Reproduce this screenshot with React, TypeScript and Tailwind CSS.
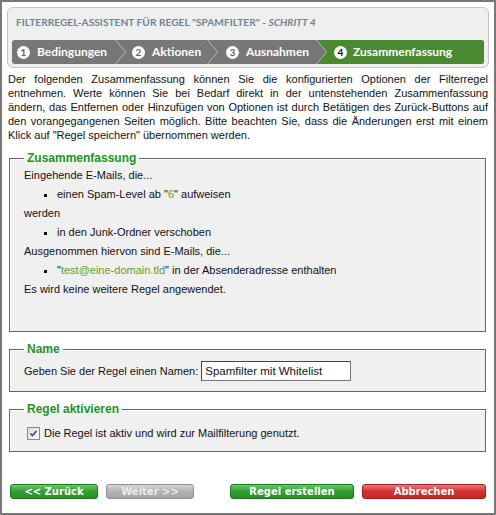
import React from "react";

type Step = { n: number; label: string; w: string; pl: string };

const steps: Step[] = [
  { n: 1, label: "Bedingungen", w: "w-[103px]", pl: "pl-[5px]" },
  { n: 2, label: "Aktionen", w: "w-[80px]", pl: "pl-[5px]" },
  { n: 3, label: "Ausnahmen", w: "w-[97px]", pl: "pl-[7px]" },
];

function Chevron({ from, to }: { from: string; to: string }) {
  return (
    <svg width="12" height="24" viewBox="0 0 12 24" className="shrink-0 block">
      <rect x="0" y="0" width="12" height="24" fill={to} />
      <polygon points="0,0 10,12 0,24" fill={from} />
      <polyline points="0.5,0 10.5,12 0.5,24" fill="none" stroke="#b8b8b8" strokeWidth="1" />
    </svg>
  );
}

function Circle({ n, dark }: { n: number; dark?: boolean }) {
  return (
    <span
      className={`flex h-[13px] w-[13px] shrink-0 items-center justify-center rounded-full bg-white text-[10px] font-bold leading-none ${
        dark ? "text-[#111]" : "text-[#666]"
      }`}
    >
      {n}
    </span>
  );
}

function StepBar() {
  return (
    <div className="flex h-[24px] overflow-hidden rounded-[3px] bg-[#777] font-['Lato',sans-serif] text-[12px] font-bold text-white">
      {steps.map((s, i) => (
        <React.Fragment key={s.n}>
          <div className={`flex items-center gap-[7px] ${s.w} ${s.pl}`}>
            <Circle n={s.n} />
            <span>{s.label}</span>
          </div>
          <Chevron from="#777777" to={i === 2 ? "#4b8a31" : "#777777"} />
        </React.Fragment>
      ))}
      <div className="flex flex-1 items-center gap-[6px] bg-[#4b8a31] pl-[6px]">
        <Circle n={4} dark />
        <span>Zusammenfassung</span>
      </div>
    </div>
  );
}

function Box({ title, children }: { title: string; children: React.ReactNode }) {
  return (
    <fieldset className="border border-[#666] bg-[#f0f0f0] pl-[14px] shadow-[inset_1px_1px_0_#fff]">
      <legend className="px-[3px] text-[12px] leading-[14px] font-bold text-[#1f931f]">{title}</legend>
      {children}
    </fieldset>
  );
}

function Btn({ label, tone, w }: { label: string; tone: "green" | "gray" | "red"; w: string }) {
  const look = {
    green:
      "border-[#1c7a1c] bg-[linear-gradient(to_bottom,#6cc66c,#34a234_45%,#239023)] text-white",
    gray: "border-[#8f8f8f] bg-[linear-gradient(to_bottom,#d6d6d6,#b4b4b4_45%,#a6a6a6)] text-[#ececec]",
    red: "border-[#a81c1c] bg-[linear-gradient(to_bottom,#ec7b7b,#d33333_45%,#c42626)] text-white",
  }[tone];
  return (
    <button
      className={`flex h-[15px] items-center justify-center rounded-[3px] border font-['DejaVu_Sans',sans-serif] text-[10px] leading-none font-bold ${w} ${look}`}
    >
      {label}
    </button>
  );
}

export default function App() {
  return (
    <div className="flex h-[515px] w-[496px] flex-col border-2 border-[#777] bg-white font-['Liberation_Sans',Arial,sans-serif] text-[#111]">
      {/* header with steps */}
      <div className="mx-[5px] mt-[5px] flex h-[61px] flex-col rounded-[6px] border border-[#c4c4c4] bg-[#efefef] px-[4px] pt-[7px]">
        <div className="h-[14px] pl-[4px] font-['Lato',sans-serif] text-[10.2px] leading-[14px] font-bold text-[#74838f]">
          FILTERREGEL-ASSISTENT FÜR REGEL "SPAMFILTER" - <i>SCHRITT 4</i>
        </div>
        <div className="mt-[11px]">
          <StepBar />
        </div>
      </div>

      <p className="mx-[6px] mt-[4px] text-justify text-[11px] leading-[14px]">
        Der folgenden Zusammenfassung können Sie die konfigurierten Optionen der Filterregel entnehmen. Werte
        können Sie bei Bedarf direkt in der untenstehenden Zusammenfassung ändern, das Entfernen oder Hinzufügen
        von Optionen ist durch Betätigen des Zurück-Buttons auf den vorangegangenen Seiten möglich. Bitte beachten
        Sie, dass die Änderungen erst mit einem Klick auf "Regel speichern" übernommen werden.
      </p>

      <div className="mt-[9px] ml-[7px] mr-[8px] flex flex-col gap-[10px]">
        <Box title="Zusammenfassung">
          <div className="h-[166px] pt-[1px] text-[11px] leading-[19px]">
            <div>Eingehende E-Mails, die...</div>
            <ul className="list-[square] pl-[33px]">
              <li>
                einen Spam-Level ab "<span className="text-[#5e9e38]">6</span>" aufweisen
              </li>
            </ul>
            <div>werden</div>
            <ul className="list-[square] pl-[33px]">
              <li>in den Junk-Ordner verschoben</li>
            </ul>
            <div>Ausgenommen hiervon sind E-Mails, die...</div>
            <ul className="list-[square] pl-[33px]">
              <li>
                "<span className="text-[#5e9e38]">test@eine-domain.tld</span>" in der Absenderadresse enthalten
              </li>
            </ul>
            <div>Es wird keine weitere Regel angewendet.</div>
          </div>
        </Box>

        <Box title="Name">
          <div className="flex items-center gap-[3px] pt-[5px] pb-[10px] text-[11px]">
            <span>Geben Sie der Regel einen Namen:</span>
            <input
              readOnly
              value="Spamfilter mit Whitelist"
              className="h-[20px] w-[150px] border border-[#444] border-r-[#777] border-b-[#777] bg-white px-[3px] text-[11.5px] text-[#111] outline-none"
            />
          </div>
        </Box>

        <Box title="Regel aktivieren">
          <div className="flex items-center gap-[4px] pt-[9px] pb-[9px] pl-[3px] text-[11px]">
            <span className="flex h-[13px] w-[13px] items-center justify-center border border-[#7b8b9c] bg-[linear-gradient(135deg,#dcdcdc,#fafafa)]">
              <svg width="9" height="9" viewBox="0 0 9 9">
                <path d="M1.5 4.5 L3.5 6.5 L7.5 2" fill="none" stroke="#3d4f63" strokeWidth="1.6" />
              </svg>
            </span>
            <span>Die Regel ist aktiv und wird zur Mailfilterung genutzt.</span>
          </div>
        </Box>
      </div>

      <div className="mt-auto mb-[14px] flex justify-between px-[8px]">
        <div className="flex gap-[8px]">
          <Btn label="<< Zurück" tone="green" w="w-[88px]" />
          <Btn label="Weiter >>" tone="gray" w="w-[88px]" />
        </div>
        <div className="flex gap-[8px]">
          <Btn label="Regel erstellen" tone="green" w="w-[124px]" />
          <Btn label="Abbrechen" tone="red" w="w-[124px]" />
        </div>
      </div>
    </div>
  );
}
